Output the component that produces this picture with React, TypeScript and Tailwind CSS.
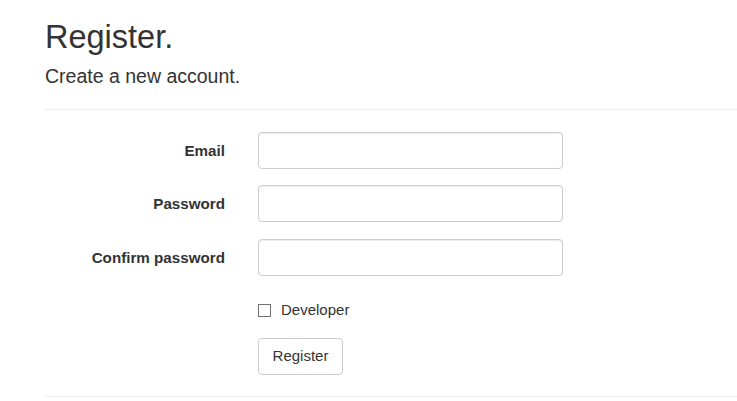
import React from "react";

export default function App() {
  const font = { fontFamily: '"Liberation Sans", Arial, sans-serif' };
  const rows = [
    { label: "Email", type: "email", mt: "mt-[22px]" },
    { label: "Password", type: "password", mt: "mt-[16px]" },
    { label: "Confirm password", type: "password", mt: "mt-[17px]" },
  ];
  return (
    <div className="w-[737px] h-[401px] bg-white overflow-hidden text-[#333]" style={font}>
      <div className="pl-[45px]">
        <h2 className="mt-[20px] h-[35px] leading-[35px] text-[32.5px] font-normal">Register.</h2>
        <h4 className="mt-[11px] h-[21px] leading-[21px] text-[19.5px] font-normal">Create a new account.</h4>
        <div className="mt-[22px] h-px bg-[#eee]" />
        <form onSubmit={(e) => e.preventDefault()}>
          {rows.map((r) => (
            <div key={r.label} className={`${r.mt} flex items-center`}>
              <label className="w-[180px] text-right text-[15.2px] font-bold leading-[20px]">{r.label}</label>
              <input
                type={r.type}
                className="ml-[33px] w-[305px] h-[37px] rounded-[4px] border border-[#ccc] bg-white px-3 text-[15px] outline-none shadow-[inset_0_1px_1px_rgba(0,0,0,0.075)]"
              />
            </div>
          ))}
          <div className="mt-[24px] ml-[213px] flex items-center h-[20px]">
            <span className="w-[13px] h-[13px] border border-[#707070] bg-white inline-block" />
            <span className="ml-[10px] text-[15px] leading-[20px]">Developer</span>
          </div>
          <div className="mt-[18px] ml-[213px]">
            <button
              type="submit"
              className="w-[85px] h-[37px] rounded-[4px] border border-[#ccc] bg-white text-[15px] text-[#333] flex items-center justify-center"
            >
              Register
            </button>
          </div>
        </form>
        <div className="mt-[21px] h-px bg-[#eee]" />
      </div>
    </div>
  );
}
